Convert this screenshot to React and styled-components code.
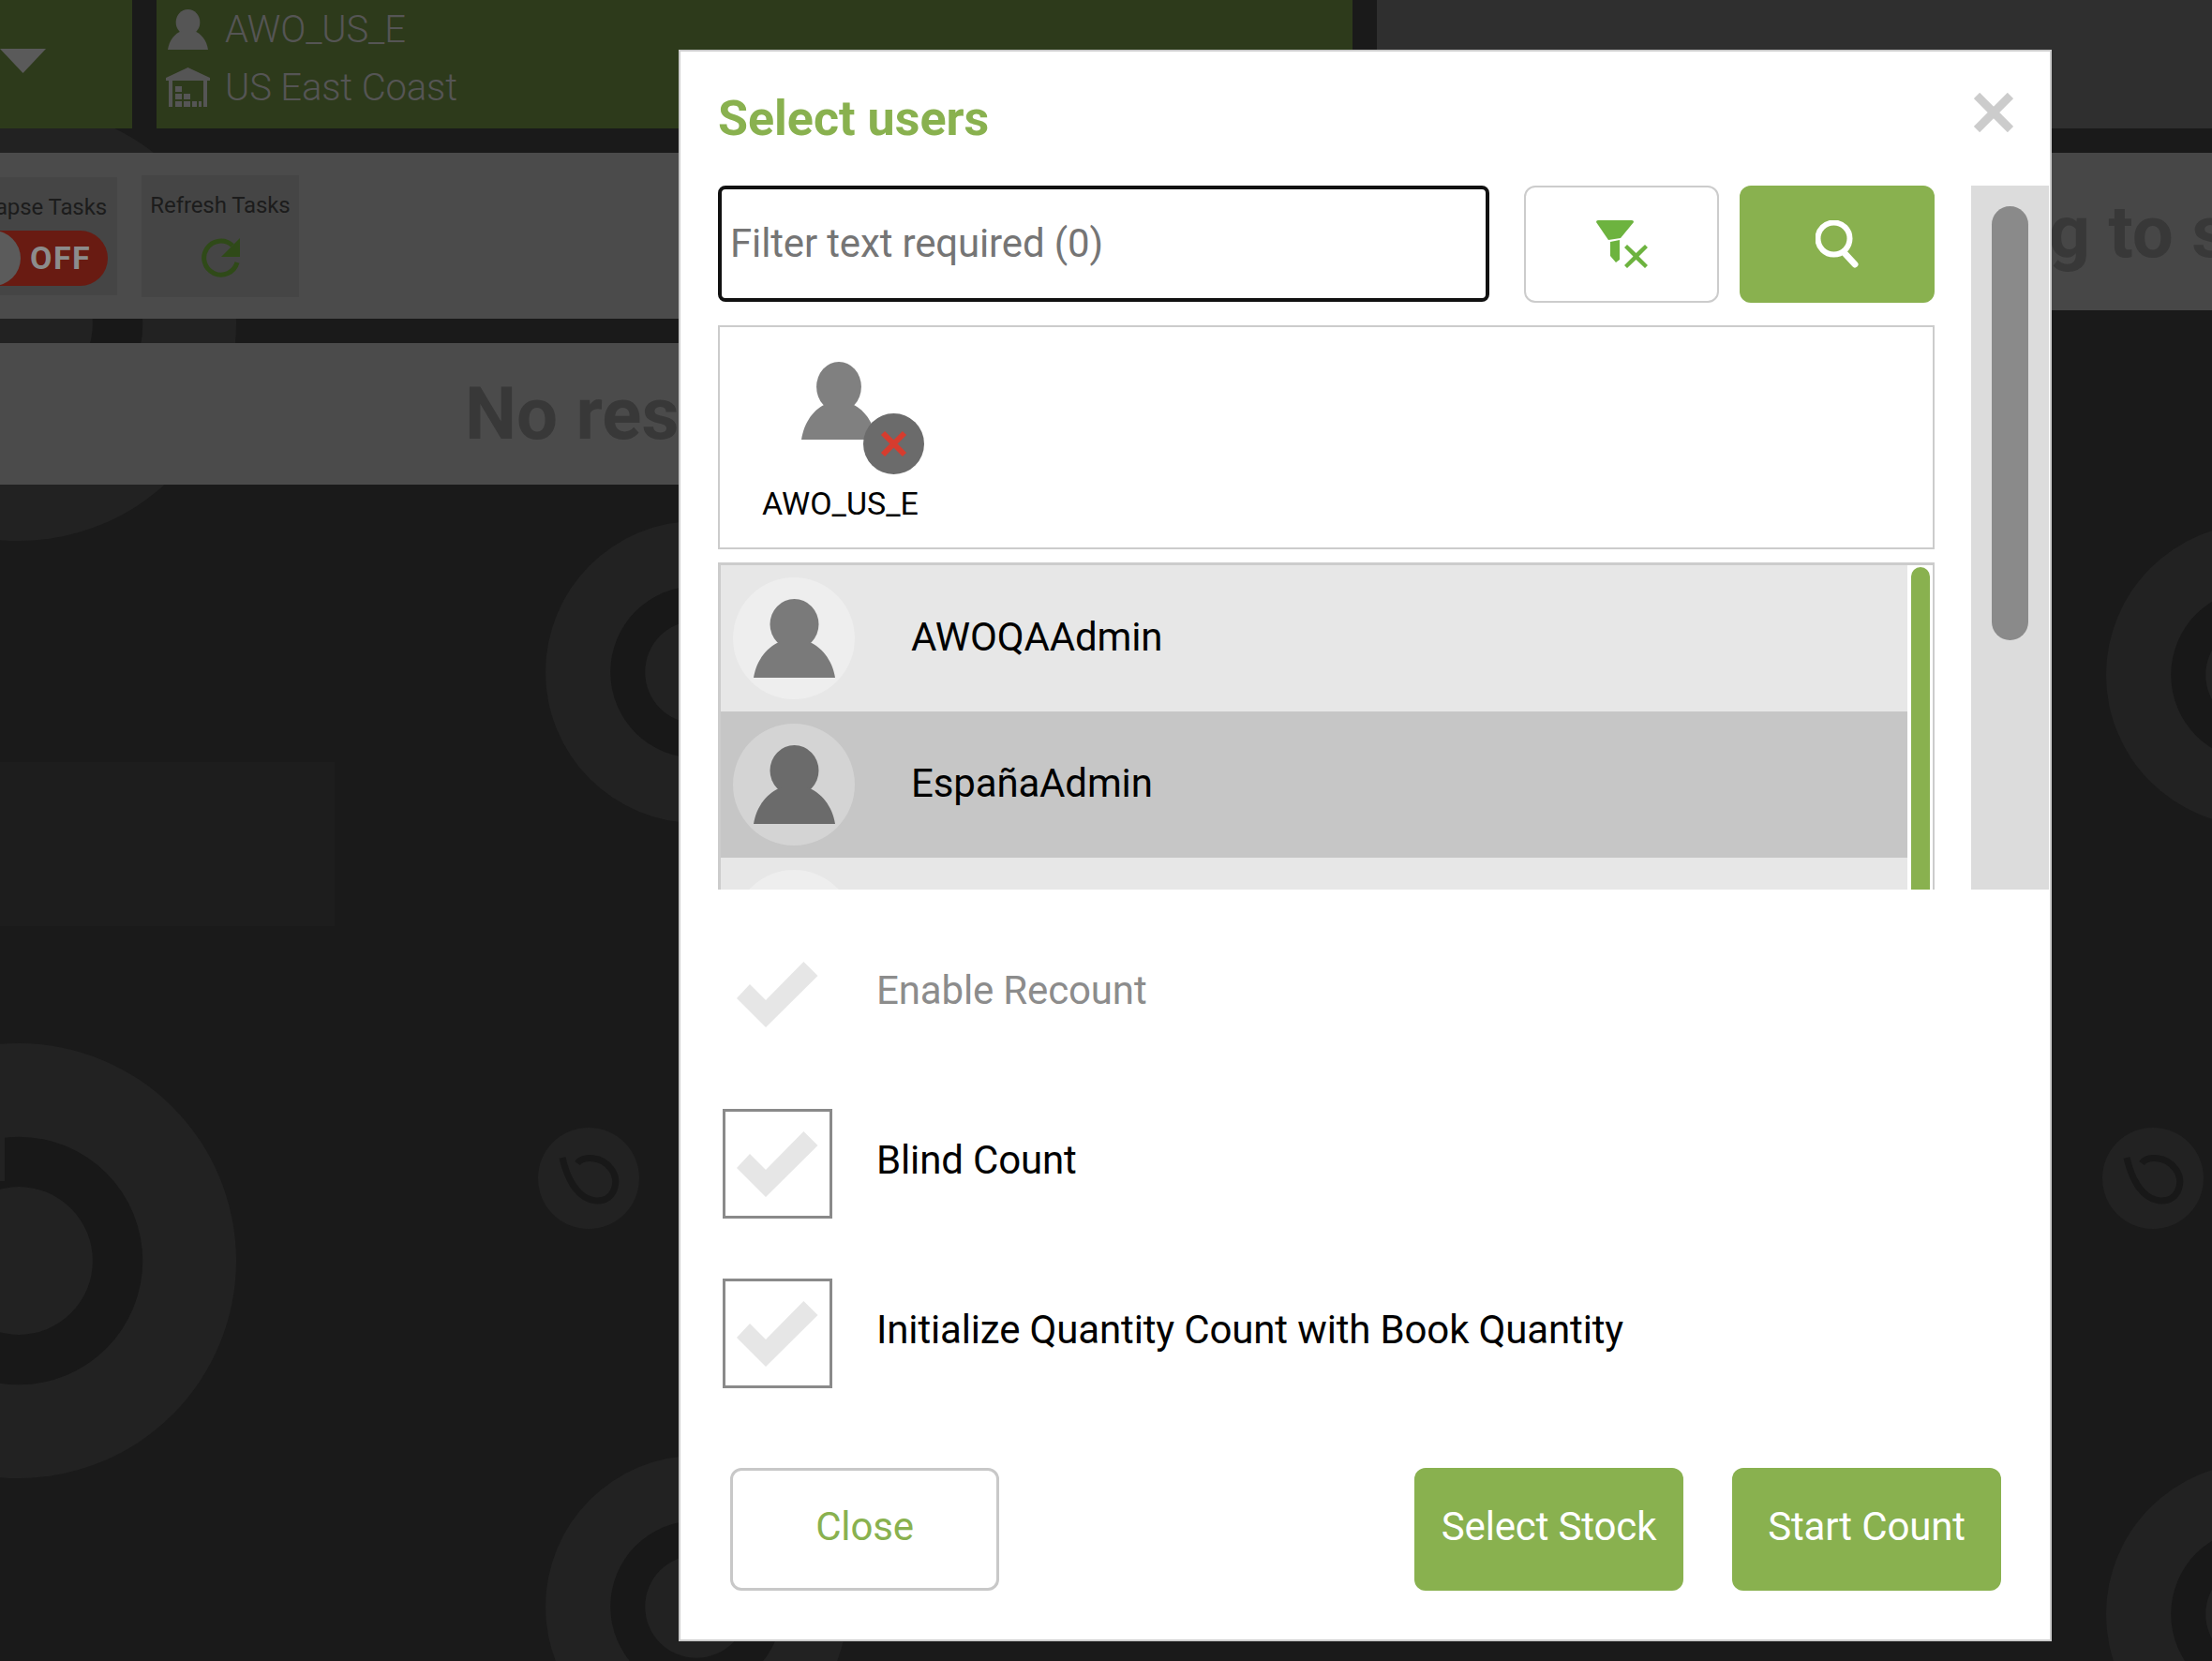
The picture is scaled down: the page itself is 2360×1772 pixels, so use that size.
import styled, { createGlobalStyle } from "styled-components";

const GlobalStyle = createGlobalStyle`
    html, body {
        margin: 0;
        padding: 0;
        background: #1a1a1a;
    }
    * {
        box-sizing: border-box;
    }
`;

const GREEN = "#89b14f";

const Page = styled.div`
    position: relative;
    width: 2360px;
    height: 1772px;
    overflow: hidden;
    background: #1a1a1a;
    font-family: Roboto, "Liberation Sans", sans-serif;
`;

const Watermark = styled.svg`
    position: absolute;
    inset: 0;
`;

const Dashboard = styled.div`
    position: relative;
    display: grid;
    grid-template-columns: 1443px 1fr;
    column-gap: 26px;
    align-items: start;
`;

const Column = styled.div`
    display: flex;
    flex-direction: column;
    gap: 26px;
    min-width: 0;
`;

const HeaderRow = styled.div`
    display: flex;
    gap: 26px;
    height: 137px;
`;

const MenuTab = styled.div`
    flex: 0 0 141px;
    display: flex;
    align-items: center;
    padding-bottom: 7px;
    background: #2d3a1b;
`;

const InfoTab = styled.div`
    flex: 1;
    padding-left: 10px;
    background: #2d3a1b;
`;

const InfoLine = styled.div`
    display: flex;
    align-items: center;
    gap: 16px;
    height: 62px;
    font-size: 40px;
    font-weight: 300;
    letter-spacing: -0.15px;
    color: #555;
`;

const InfoIcon = styled.div`
    flex: 0 0 47px;
    display: flex;
    justify-content: center;
`;

const Toolbar = styled.div`
    display: flex;
    align-items: center;
    gap: 26px;
    height: 177px;
    background: #4b4b4b;
`;

const ToolTile = styled.div`
    flex: 0 0 ${(p) => p.$width}px;
    min-width: 0;
    height: ${(p) => p.$height}px;
    display: flex;
    flex-direction: column;
    align-items: ${(p) => (p.$end ? "flex-end" : "center")};
    padding: 18px ${(p) => (p.$end ? 11 : 0)}px 0 0;
    background: #454545;
`;

const ToolLabel = styled.div`
    flex: none;
    font-size: 24px;
    line-height: 28px;
    letter-spacing: -0.1px;
    white-space: nowrap;
    color: #1c1c1c;
`;

const OffToggle = styled.div`
    display: flex;
    align-items: center;
    flex: none;
    width: 152px;
    height: 59px;
    margin: 11px -1px 0 0;
    border-radius: 30px;
    background: #691b12;
    font-size: 34px;
    font-weight: 700;
    letter-spacing: 1.5px;
    color: #8c8c8c;
`;

const ToggleKnob = styled.div`
    flex: 0 0 59px;
    height: 59px;
    margin-right: 10px;
    border-radius: 50%;
    background: #5b5b5b;
`;

const RefreshIcon = styled.svg`
    margin-top: 21px;
`;

const MessageBand = styled.div`
    display: flex;
    align-items: center;
    height: ${(p) => p.$height}px;
    padding-left: ${(p) => p.$indent}px;
    overflow: hidden;
    white-space: nowrap;
    background: ${(p) => p.$bg};
    font-size: 78px;
    font-weight: 700;
    color: #383838;
`;

const TopBlank = styled.div`
    height: 137px;
    background: #2f2f2f;
`;

const Modal = styled.div`
    position: absolute;
    left: 724px;
    top: 53px;
    width: 1465px;
    height: 1698px;
    display: flex;
    flex-direction: column;
    border: 2px solid #ccc;
    background: #fff;
`;

const ModalHeader = styled.div`
    display: flex;
    justify-content: space-between;
    height: 143px;
    padding: 44px 39px 0 40px;
`;

const Title = styled.h1`
    margin: 0;
    font-size: 52px;
    line-height: 56px;
    font-weight: 700;
    color: ${GREEN};
`;

const ScrollRegion = styled.div`
    display: flex;
    gap: 39px;
    height: 751px;
    padding-left: 40px;
`;

const Pane = styled.div`
    flex: 0 0 1298px;
    display: flex;
    flex-direction: column;
    overflow: hidden;
`;

const FilterRow = styled.div`
    display: flex;
    flex: none;
    height: 125px;
`;

const FilterInput = styled.input`
    flex: 0 0 823px;
    height: 124px;
    margin: 0 37px 0 0;
    padding: 0 0 2px 9px;
    border: 4px solid #111;
    border-radius: 8px;
    outline: none;
    font-family: inherit;
    font-size: 42px;
    letter-spacing: -0.15px;
    color: #222;
    &::placeholder {
        color: #757575;
        opacity: 1;
    }
`;

const IconButton = styled.button`
    flex: 0 0 208px;
    display: flex;
    align-items: center;
    justify-content: center;
    padding: 0;
    border: ${(p) => (p.$primary ? "none" : "2px solid #ccc")};
    border-radius: 12px;
    background: ${(p) => (p.$primary ? GREEN : "#fff")};
    & + & {
        margin-left: 22px;
    }
`;

const SelectedBox = styled.div`
    flex: none;
    height: 239px;
    margin-top: 24px;
    padding: 37px 0 0 45px;
    border: 2px solid #ccc;
`;

const SelectedTile = styled.div`
    display: inline-flex;
    flex-direction: column;
    align-items: center;
`;

const SelectedIcon = styled.div`
    position: relative;
    width: 80px;
    height: 83px;
    margin-right: 3px;
`;

const RemoveBadge = styled.svg`
    position: absolute;
    left: 66px;
    top: 55px;
`;

const SelectedName = styled.div`
    margin-top: 49px;
    font-size: 34px;
    line-height: 38px;
    color: #000;
`;

const UserList = styled.div`
    flex: 1;
    display: flex;
    min-height: 0;
    margin-top: 14px;
    border: 3px solid #ccc;
    border-width: 3px 2px 0 3px;
    overflow: hidden;
`;

const Rows = styled.div`
    flex: 1;
`;

const Row = styled.div`
    display: flex;
    align-items: center;
    height: 156px;
    padding-left: 13px;
    background: ${(p) => (p.$selected ? "#c6c6c6" : "#e7e7e7")};
`;

const RowName = styled.div`
    margin: 0 0 4px 60px;
    font-size: 42px;
    letter-spacing: -0.15px;
    color: #000;
`;

const Avatar = styled.div`
    flex: 0 0 130px;
    height: 130px;
    display: flex;
    align-items: center;
    justify-content: center;
    border-radius: 50%;
    background: ${(p) => (p.$selected ? "#d4d4d4" : "#eee")};
`;

const ListTrack = styled.div`
    flex: 0 0 27px;
    padding: 2px 3px 0 4px;
`;

const ListThumb = styled.div`
    height: 500px;
    border-radius: 10px;
    background: ${GREEN};
`;

const PageTrack = styled.div`
    flex: 0 0 83px;
    padding: 22px 22px 0;
    background: #dcdcdc;
`;

const PageThumb = styled.div`
    height: 463px;
    border-radius: 20px;
    background: #8a8a8a;
`;

const Options = styled.div`
    display: flex;
    flex-direction: column;
    gap: 64px;
    margin-top: 53px;
    padding-left: 45px;
`;

const OptionRow = styled.div`
    display: flex;
    align-items: center;
    height: 117px;
`;

const OptionLabel = styled.div`
    margin: 0 0 9px 47px;
    font-size: 42px;
    letter-spacing: -0.15px;
    color: ${(p) => (p.$muted ? "#8c8c8c" : "#000")};
`;

const CheckBox = styled.div`
    flex: 0 0 117px;
    height: 117px;
    display: flex;
    align-items: center;
    justify-content: center;
    border: 3px solid ${(p) => (p.$plain ? "transparent" : "#8a8a8a")};
`;

const Footer = styled.div`
    display: flex;
    gap: 52px;
    margin-top: 85px;
    padding: 0 52px 0 53px;
`;

const ActionButton = styled.button`
    flex: 0 0 287px;
    height: 131px;
    padding: 0 0 6px;
    border: ${(p) => (p.$outline ? "3px solid #c8c8c8" : "none")};
    border-radius: 12px;
    background: ${(p) => (p.$outline ? "#fff" : GREEN)};
    font-family: inherit;
    font-size: 42px;
    letter-spacing: -0.15px;
    color: ${(p) => (p.$outline ? GREEN : "#fff")};
    &:first-child {
        margin-right: auto;
    }
`;

function Person({ width, height, color }) {
    return (
        <svg width={width} height={height} viewBox="0 0 87 84" preserveAspectRatio="none">
            <ellipse cx="43.5" cy="27" rx="26" ry="27" fill={color} />
            <path d="M0 84C3 65 15 50 30 45L57 45C72 50 84 65 87 84Z" fill={color} />
        </svg>
    );
}

function Warehouse() {
    return (
        <svg width="47" height="42" viewBox="0 0 47 42" fill="#555">
            <path d="M23.5 0L47 11V14H0V11Z" />
            <path d="M3 14H7V42H3ZM40 14H44V42H40Z" />
            <path d="M10 20H17V26H10ZM10 28H17V34H10ZM19 28H26V34H19ZM10 36H17V42H10ZM19 36H26V42H19ZM28 36H33V42H28ZM35 36H38V42H35Z" />
        </svg>
    );
}

function Check() {
    return (
        <svg width="87" height="70" viewBox="0 0 87 70">
            <path d="M71.4 0L86.5 15L31 70L0 39L14 24L31 41Z" fill="#e6e6e6" />
        </svg>
    );
}

const users = [
    { name: "AWOQAAdmin" },
    { name: "EspañaAdmin", selected: true },
    { name: "" },
];

const options = [
    { label: "Enable Recount", plain: true },
    { label: "Blind Count" },
    { label: "Initialize Quantity Count with Book Quantity" },
];

function BigLogo({ x, y, r }) {
    return (
        <g>
            <circle cx={x} cy={y} r={r} fill="#222" />
            <circle cx={x} cy={y} r={r * 0.57} fill="#181818" />
            <circle cx={x} cy={y} r={r * 0.34} fill="#222" />
        </g>
    );
}

function SmallLogo({ x, y }) {
    return (
        <g transform={`translate(${x} ${y})`}>
            <circle r="54" fill="#222" />
            <path
                d="M-28 -22C-24 -4 -14 22 8 24C28 25 34 2 24 -10C14 -24 -6 -24 -12 -16"
                fill="none"
                stroke="#181818"
                strokeWidth="7"
            />
        </g>
    );
}

function App() {
    return (
        <Page>
            <GlobalStyle />
            <Watermark width="2360" height="1772">
                <rect x="0" y="813" width="357" height="175" fill="#1d1d1d" />
                <BigLogo x={20} y={345} r={232} />
                <BigLogo x={20} y={1345} r={232} />
                <rect x="0" y="1205" width="5" height="55" fill="#222" />
                <BigLogo x={743} y={717} r={161} />
                <BigLogo x={743} y={1714} r={161} />
                <SmallLogo x={628} y={1257} />
                <BigLogo x={2408} y={720} r={161} />
                <BigLogo x={2408} y={1722} r={161} />
                <SmallLogo x={2297} y={1257} />
            </Watermark>

            <Dashboard>
                <Column>
                    <HeaderRow>
                        <MenuTab>
                            <svg width="49" height="26" viewBox="0 0 49 26">
                                <path d="M0 0H49L24.5 26Z" fill="#5a5a5a" />
                            </svg>
                        </MenuTab>
                        <InfoTab>
                            <InfoLine>
                                <InfoIcon>
                                    <Person width={43} height={43} color="#555" />
                                </InfoIcon>
                                AWO_US_E
                            </InfoLine>
                            <InfoLine>
                                <InfoIcon>
                                    <Warehouse />
                                </InfoIcon>
                                US East Coast
                            </InfoLine>
                        </InfoTab>
                    </HeaderRow>
                    <Toolbar>
                        <ToolTile $width={125} $height={126} $end>
                            <ToolLabel>Collapse Tasks</ToolLabel>
                            <OffToggle>
                                <ToggleKnob />
                                OFF
                            </OffToggle>
                        </ToolTile>
                        <ToolTile $width={168} $height={130}>
                            <ToolLabel>Refresh Tasks</ToolLabel>
                            <RefreshIcon width="41" height="43" viewBox="0 0 41 43">
                                <path d="M33 8A18 18 0 1 0 38 26" fill="none" stroke="#2f4a18" strokeWidth="5" />
                                <path d="M41 0V20H21Z" fill="#2f4a18" />
                            </RefreshIcon>
                        </ToolTile>
                    </Toolbar>
                    <MessageBand $height={151} $indent={496} $bg="#4b4b4b">
                        No results found
                    </MessageBand>
                </Column>
                <Column>
                    <TopBlank />
                    <MessageBand $height={168} $indent={483} $bg="#474747">
                        Nothing to select
                    </MessageBand>
                </Column>
            </Dashboard>

            <Modal>
                <ModalHeader>
                    <Title>Select users</Title>
                    <svg width="42" height="42" viewBox="0 0 42 42">
                        <path d="M3 3L39 39M39 3L3 39" stroke="#ccc" strokeWidth="9" />
                    </svg>
                </ModalHeader>

                <ScrollRegion>
                    <Pane>
                        <FilterRow>
                            <FilterInput type="text" placeholder="Filter text required (0)" />
                            <IconButton type="button">
                                <svg width="55" height="51" viewBox="0 0 55 51" fill="#6db33f">
                                    <path d="M0 2Q0 0 2 0H38Q40 0 40 2L26 19L13 21Z" />
                                    <path d="M15 23L25 21V42L21 45L15 38Z" />
                                    <path d="M33 26L42.5 35L52 26L55 29L45.5 38.5L55 48L52 51L42.5 42L33 51L30 48L39.5 38.5L30 29Z" />
                                </svg>
                            </IconButton>
                            <IconButton type="button" $primary>
                                <svg width="46" height="51" viewBox="0 0 46 51" fill="none" stroke="#fff">
                                    <ellipse cx="19.5" cy="19.5" rx="17" ry="17" strokeWidth="6" />
                                    <path d="M30 34L42 47" strokeWidth="7" strokeLinecap="round" />
                                </svg>
                            </IconButton>
                        </FilterRow>

                        <SelectedBox>
                            <SelectedTile>
                                <SelectedIcon>
                                    <Person width={80} height={83} color="#808080" />
                                    <RemoveBadge width="65" height="65" viewBox="0 0 65 65">
                                        <circle cx="32.5" cy="32.5" r="32.5" fill="#6b6b6b" />
                                        <path d="M21 21L44 44M44 21L21 44" stroke="#d63c2e" strokeWidth="6" />
                                    </RemoveBadge>
                                </SelectedIcon>
                                <SelectedName>AWO_US_E</SelectedName>
                            </SelectedTile>
                        </SelectedBox>

                        <UserList>
                            <Rows>
                                {users.map((user) => (
                                    <Row key={user.name} $selected={user.selected}>
                                        <Avatar $selected={user.selected}>
                                            <Person width={87} height={84} color={user.selected ? "#6b6b6b" : "#7a7a7a"} />
                                        </Avatar>
                                        <RowName>{user.name}</RowName>
                                    </Row>
                                ))}
                            </Rows>
                            <ListTrack>
                                <ListThumb />
                            </ListTrack>
                        </UserList>
                    </Pane>
                    <PageTrack>
                        <PageThumb />
                    </PageTrack>
                </ScrollRegion>

                <Options>
                    {options.map((option) => (
                        <OptionRow key={option.label}>
                            <CheckBox $plain={option.plain}>
                                <Check />
                            </CheckBox>
                            <OptionLabel $muted={option.plain}>{option.label}</OptionLabel>
                        </OptionRow>
                    ))}
                </Options>

                <Footer>
                    <ActionButton type="button" $outline>Close</ActionButton>
                    <ActionButton type="button">Select Stock</ActionButton>
                    <ActionButton type="button">Start Count</ActionButton>
                </Footer>
            </Modal>
        </Page>
    );
}

export default App;
